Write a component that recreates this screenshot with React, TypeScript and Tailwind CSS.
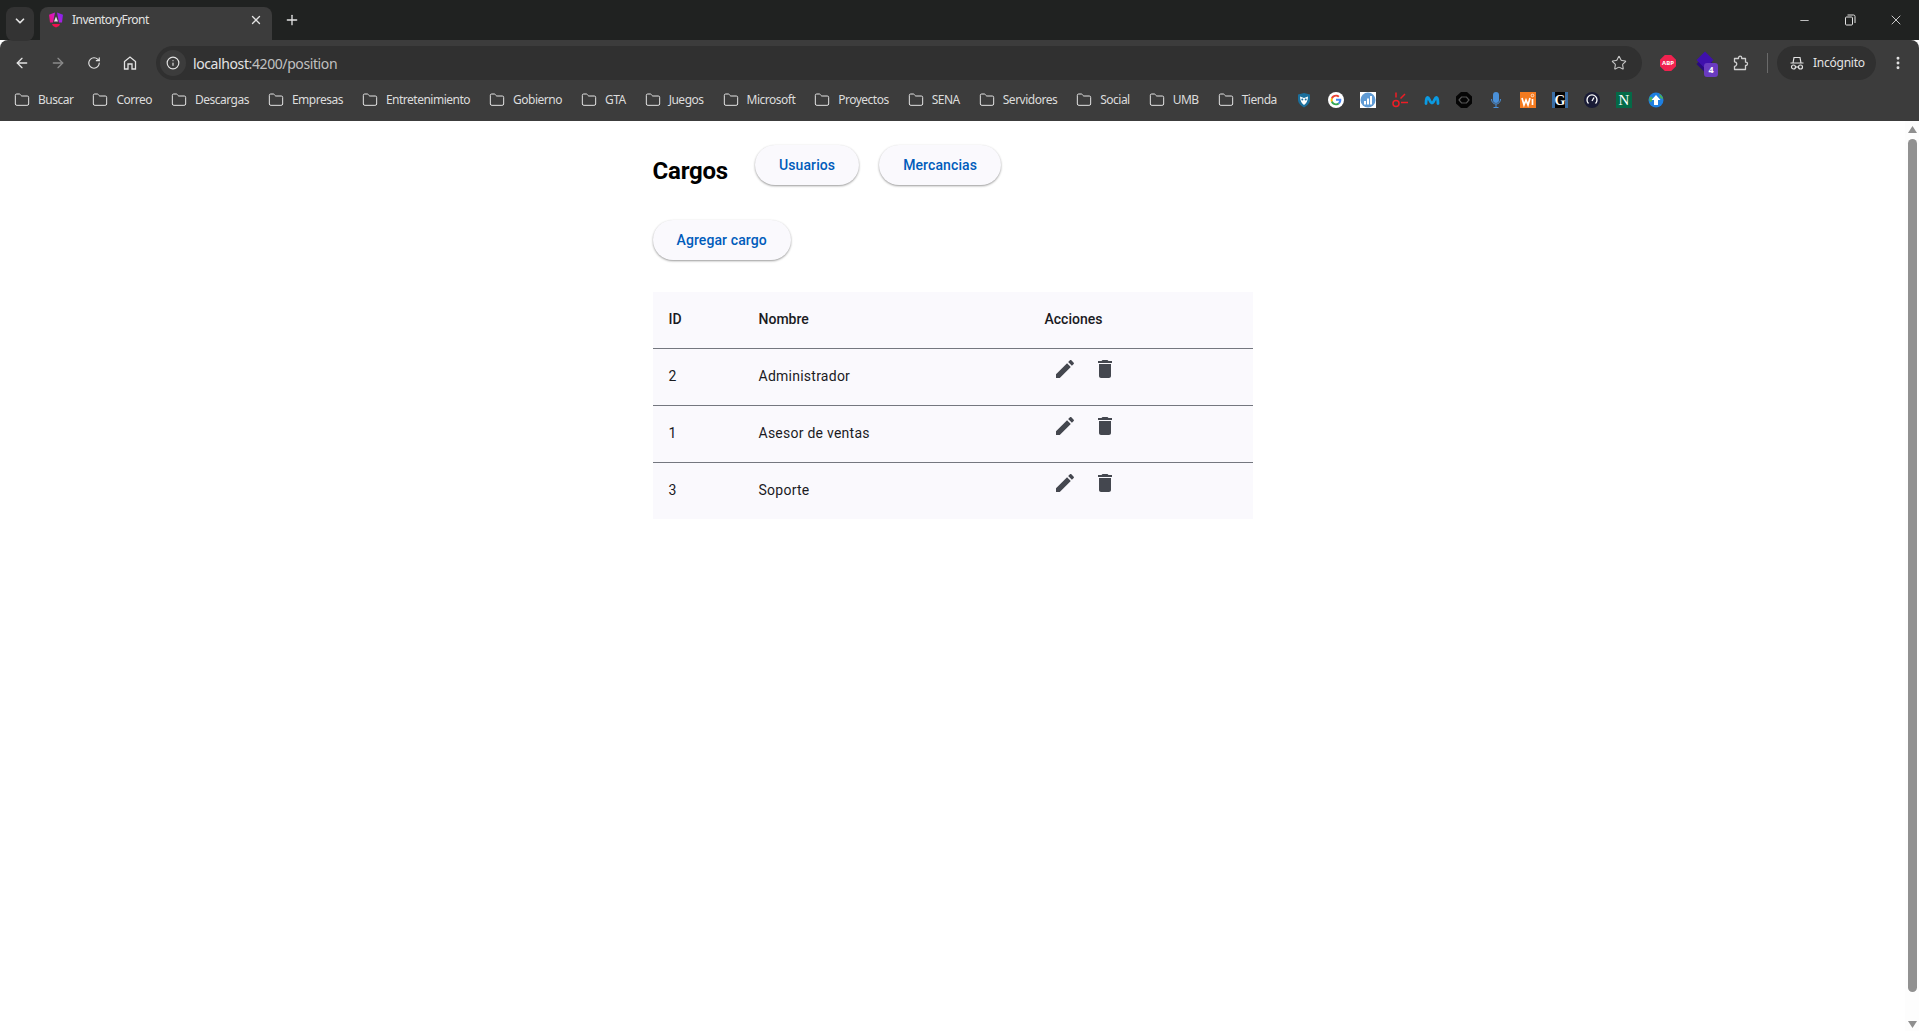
import { ArrowLeft, ArrowRight, ChevronDown, EllipsisVertical, Folder, Info, Minus, Plus, RotateCw, Star, X } from 'lucide-react'

const bookmarks = ['Buscar', 'Correo', 'Descargas', 'Empresas', 'Entretenimiento', 'Gobierno', 'GTA', 'Juegos', 'Microsoft', 'Proyectos', 'SENA', 'Servidores', 'Social', 'UMB', 'Tienda']

const rows = [
  { id: 2, name: 'Administrador' },
  { id: 1, name: 'Asesor de ventas' },
  { id: 3, name: 'Soporte' },
]

function AngularLogo() {
  return (
    <svg width="16" height="16" viewBox="0 0 16 16">
      <defs>
        <linearGradient id="ngl" x1="0" y1="1" x2="1" y2="0">
          <stop offset="0" stopColor="#f5106a" />
          <stop offset="1" stopColor="#c81ee0" />
        </linearGradient>
        <linearGradient id="ngr" x1="0" y1="1" x2="1" y2="0">
          <stop offset="0" stopColor="#c020d8" />
          <stop offset="1" stopColor="#7a22f0" />
        </linearGradient>
      </defs>
      <path fill="url(#ngl)" d="M7 0.500 1 2.700 2 10.500 5 10.500z" />
      <path fill="url(#ngr)" d="M9 0.500 15 2.700 14 10.500 11 10.500z" />
      <path fill="#e8e8e8" d="M8 4.500 10 9.500H6z" />
      <path fill="#f0104f" d="M4 12h8l-1 2-3 1.500L5 14z" />
    </svg>
  )
}

function Favicons() {
  return (
    <div className="flex items-center gap-4">
      <svg width="16" height="16" viewBox="0 0 16 16">
        <path fill="#1b6f9c" d="M2 2.500 8 1l6 1.500V8c0 3-3 6-6 7.500C5 14 2 11 2 8z" />
        <path fill="#fff" d="M4 4.500 8 6l4-1.500C12 9 10 11.500 8 13 6 11.500 4 9 4 4.500z" />
        <circle cx="6.300" cy="7.500" r="1" fill="#1b6f9c" />
        <circle cx="9.700" cy="7.500" r="1" fill="#1b6f9c" />
      </svg>
      <svg width="16" height="16" viewBox="0 0 16 16">
        <circle cx="8" cy="8" r="8" fill="#fff" />
        <path fill="#ea4335" d="M8 2.700c1.400 0 2.600.5 3.500 1.400L10.100 5.500C9.600 5 8.800 4.600 8 4.600c-1.500 0-2.800 1-3.200 2.400L3 5.700C3.900 3.900 5.800 2.700 8 2.700z" />
        <path fill="#fbbc05" d="M2.700 8c0-.8.100-1.600.4-2.300L4.800 7c-.1.300-.2.700-.2 1s.1.700.2 1l-1.700 1.300C2.800 9.600 2.700 8.800 2.700 8z" />
        <path fill="#34a853" d="M8 13.300c-2.200 0-4.100-1.200-5-3L4.800 9c.4 1.400 1.700 2.400 3.200 2.400.8 0 1.500-.2 2-.6l1.600 1.200C10.700 12.800 9.400 13.300 8 13.300z" />
        <path fill="#4285f4" d="M13.200 6.800H8v2h3.200c-.2.800-.6 1.500-1.200 2l1.600 1.200c1-1 1.700-2.400 1.700-4 0-.4 0-.8-.1-1.200z" />
      </svg>
      <svg width="16" height="16" viewBox="0 0 16 16">
        <rect width="16" height="16" fill="#fff" />
        <circle cx="8" cy="8" r="7.500" fill="#5f9bd5" />
        <rect x="4" y="9" width="2" height="3.500" fill="#fff" />
        <rect x="7" y="6.500" width="2" height="6" fill="#fff" />
        <rect x="10" y="4" width="2" height="8.500" fill="#fff" />
      </svg>
      <svg width="16" height="16" viewBox="0 0 16 16" fill="none" stroke="#ef1c25" strokeWidth="1.500">
        <circle cx="4" cy="11.500" r="3" />
        <path d="M4 0.500v5M13 2 8.500 6.500M9 10.500h7" />
      </svg>
      <svg width="16" height="16" viewBox="0 0 16 16" fill="none" stroke="#0b9be3" strokeWidth="2.800" strokeLinecap="round">
        <path d="M2 11.500c0-3 .7-6 1.700-6 1.500 0 2.300 5.500 4.300 5.500s2.800-5.500 4.300-5.500c1 0 1.700 3 1.700 6" />
      </svg>
      <svg width="16" height="16" viewBox="0 0 16 16">
        <path fill="#050505" d="M5 0h6l5 4.500v7L11 16H5l-5-4.500v-7z" />
        <path fill="#050505" stroke="#555" strokeWidth="1.200" d="M3 8 5.500 5h5L13 8l-2.500 3h-5z" />
      </svg>
      <svg width="16" height="16" viewBox="0 0 16 16">
        <rect x="5" y="0" width="6" height="11" rx="3" fill="#4a90d9" />
        <path fill="none" stroke="#4a90d9" d="M3.500 7c0 3 2 5 4.500 5s4.500-2 4.500-5M8 12v3M5.500 15.500h5" />
      </svg>
      <svg width="16" height="16" viewBox="0 0 16 16">
        <rect width="16" height="16" fill="#f47b20" />
        <path fill="none" stroke="#fff" strokeWidth="1.700" d="M2 6l2 7 2-5 2 5 2-7M12.500 7v6" />
        <circle cx="12.500" cy="3.500" r="1.300" fill="none" stroke="#fff" strokeWidth="0.700" />
      </svg>
      <svg width="16" height="16" viewBox="0 0 16 16">
        <rect width="16" height="16" fill="#3a6ea5" />
        <rect x="3" y="0" width="10" height="16" fill="#050505" />
        <text x="8" y="13" textAnchor="middle" fontSize="14" fontWeight="700" fontFamily="Liberation Serif, serif" fill="#fff">G</text>
      </svg>
      <svg width="16" height="16" viewBox="0 0 16 16">
        <circle cx="8" cy="8" r="8" fill="#1a1c36" />
        <path fill="none" stroke="#fff" strokeWidth="1.300" d="M4.500 11.500a5 5 0 1 1 7 0" />
        <path stroke="#fff" strokeWidth="1.300" d="M8 9 10 5.500" />
      </svg>
      <svg width="16" height="16" viewBox="0 0 16 16">
        <rect width="16" height="16" fill="#046a47" />
        <text x="8" y="13" textAnchor="middle" fontSize="15" fontFamily="Liberation Serif, serif" fill="#fff">N</text>
      </svg>
      <svg width="16" height="16" viewBox="0 0 16 16">
        <circle cx="8" cy="8" r="7.500" fill="#1e7fe0" />
        <path fill="#49b05a" d="M1.500 5.500c2-1.500 3-.5 3 1.500s-1 3-2 3-1.500-2.500-1-4.500zM11.500 2c2 1 3.500 3 3.500 5-1.500 0-3-1-3.500-2.500z" />
        <path fill="#fff" d="M8 3l4.500 5H10v5H6V8H3.500z" />
      </svg>
    </div>
  )
}

function ChromeBar() {
  return (
    <div className="font-['Noto_Sans','Liberation_Sans',sans-serif] shrink-0">
      <div className="h-10 bg-[#202221] flex items-start pt-[7px]">
        <div className="w-7 h-[34px] ml-[6px] pb-[7px] rounded-lg bg-[#333] flex items-center justify-center text-[#e3e3e3]">
          <ChevronDown size={14} strokeWidth={3} />
        </div>
        <div className="w-[232px] h-[33px] ml-[6px] pb-[7px] rounded-t-lg bg-[#3c3c3c] flex items-center pl-2 pr-[9px] text-[#e3e3e3]">
          <AngularLogo />
          <span className="ml-2 text-[12px] tracking-[-0.55px]">InventoryFront</span>
          <X size={14} strokeWidth={2.2} className="ml-auto" />
        </div>
        <div className="h-[26px] ml-3 flex items-center text-[#e3e3e3]">
          <Plus size={16} strokeWidth={2} />
        </div>
        <div className="ml-auto h-[26px] flex items-center text-[#e3e3e3]">
          <div className="w-[46px] flex justify-center"><Minus size={13} strokeWidth={1.500} /></div>
          <div className="w-[46px] flex justify-center">
            <svg width="12" height="12" viewBox="0 0 12 12" fill="none" stroke="currentColor">
              <rect x="1.500" y="3" width="7" height="8" rx="1" />
              <path d="M3.500 1h6a1.500 1.500 0 0 1 1.500 1.500V9" />
            </svg>
          </div>
          <div className="w-[46px] flex justify-center"><X size={16} strokeWidth={1.300} /></div>
        </div>
      </div>
      <div className="h-[41px] pt-[6px] pb-px bg-[#3c3c3c] rounded-t-lg flex items-center text-[#e3e3e3]">
        <div className="w-9 ml-1 flex justify-center"><ArrowLeft size={16} strokeWidth={2} /></div>
        <div className="w-9 flex justify-center text-[#8a8a8a]"><ArrowRight size={16} strokeWidth={2} /></div>
        <div className="w-9 flex justify-center"><RotateCw size={14} strokeWidth={2} /></div>
        <div className="w-9 flex justify-center">
          <svg width="16" height="16" viewBox="0 0 16 16" fill="none" stroke="currentColor" strokeWidth="1.300">
            <path d="M2.500 14V6.500L8 2l5.500 4.500V14h-3.500V9H6v5z" />
          </svg>
        </div>
        <div className="ml-2 w-[1486px] h-[34px] rounded-full bg-[#303030] flex items-center pl-1 pr-4">
          <div className="w-[26px] h-[26px] rounded-full bg-[#3c3c3c] flex items-center justify-center"><Info size={14} strokeWidth={2} /></div>
          <span className="ml-[7px] text-[14px] tracking-[-0.4px]">localhost<span className="text-[#c0c0c0]">:4200/position</span></span>
          <Star size={16} strokeWidth={1.600} className="ml-auto mr-[-1px] text-[#c8c8c8]" />
        </div>
        <div className="flex items-center ml-[18px]">
          <div className="w-4 h-4 bg-[#f0224f] [clip-path:polygon(30%_0,70%_0,100%_30%,100%_70%,70%_100%,30%_100%,0_70%,0_30%)] flex items-center justify-center text-[6px] font-bold text-white">ABP</div>
          <div className="relative ml-[20px] w-[18px] h-4">
            <div className="w-3 h-3 rotate-45 bg-[#2a0a80] mt-[3px] ml-[3px]" />
            <div className="absolute left-[3px] top-[-1px] w-3 h-3 rotate-45 bg-[#3f10ad]" />
            <span className="absolute left-2 top-2 w-[14px] h-[14px] rounded-[3px] bg-[#6a3bc0] text-[9px] font-bold text-white flex items-center justify-center">4</span>
          </div>
          <svg width="16" height="16" viewBox="0 0 16 16" fill="none" stroke="currentColor" strokeWidth="1.300" strokeLinejoin="round" className="ml-[19px] text-[#d0d0d0]">
            <path d="M1.500 3.500h4v-.7a1.600 1.600 0 0 1 3.200 0v.7h3.800v3.700h.4a1.600 1.600 0 0 1 0 3.200h-.4v4.100H1.500v-3.200a2.100 2.100 0 0 0 0-4.500z" />
          </svg>
          <div className="w-px h-5 bg-[#6a6a6a] ml-[18px]" />
          <div className="ml-[9px] w-[99px] h-[34px] rounded-full bg-[#303030] flex items-center pl-3">
            <svg width="16" height="16" viewBox="0 0 16 16" fill="none" stroke="currentColor" strokeWidth="1.200">
              <path d="M1.500 8h13M4 8l1-5.500h6L12 8" />
              <circle cx="4.500" cy="12" r="2" />
              <circle cx="11.500" cy="12" r="2" />
              <path d="M6.500 12h3" />
            </svg>
            <span className="ml-2 text-[12px] tracking-[-0.25px]">Incógnito</span>
          </div>
          <EllipsisVertical size={16} strokeWidth={2.400} className="ml-[14px]" />
        </div>
      </div>
      <div className="h-10 pb-[2px] bg-[#3c3c3c] flex items-center pl-[14px] text-[#e3e3e3]">
        {bookmarks.map((b) => (
          <div key={b} className="flex items-center gap-2 mr-[19px]">
            <Folder size={16} strokeWidth={1.500} />
            <span className="text-[12px] tracking-[-0.5px] text-[#dcdcdc]">{b}</span>
          </div>
        ))}
        <Favicons />
      </div>
    </div>
  )
}

function PillButton({ label }: { label: string }) {
  return (
    <button className="h-10 px-6 rounded-full bg-[#faf9fd] text-[#005cbb] text-[14px] font-medium tracking-[0.1px] shadow-[0_1px_2px_rgba(0,0,0,0.3),0_1px_3px_0_rgba(0,0,0,0.12)]">
      {label}
    </button>
  )
}

function IconButton({ d }: { d: string }) {
  return (
    <button className="w-10 h-10 flex items-center justify-center text-[#44474f]">
      <svg width="24" height="24" viewBox="0 0 24 24" fill="currentColor">
        <path d={d} />
      </svg>
    </button>
  )
}

function Scrollbar() {
  return (
    <div className="w-[14px] shrink-0 bg-[#fdfdfd] flex flex-col items-start pl-[3px]">
      <svg width="9" height="7" viewBox="0 0 9 7" className="shrink-0 mt-[5px]"><path d="M0 7 4.500 0 9 7z" fill="#8f8f8f" /></svg>
      <div className="w-[9px] h-[853px] mt-[6px] rounded-full bg-[#919191]" />
      <svg width="9" height="7" viewBox="0 0 9 7" className="shrink-0 mt-auto mb-[3px]"><path d="M0 0 4.500 7 9 0z" fill="#8f8f8f" /></svg>
    </div>
  )
}

export default function App() {
  return (
    <div className="h-screen w-full overflow-hidden flex flex-col bg-white font-['Roboto',sans-serif]">
      <ChromeBar />
      <div className="flex-1 flex min-h-0">
        <main className="flex-1 min-w-0">
          <div className="w-[600px] mx-auto pt-6">
            <div className="flex items-start">
              <h2 className="text-[24px] leading-8 font-bold text-black mt-[10px] mr-[27px] tracking-[-0.2px]">Cargos</h2>
              <PillButton label="Usuarios" />
              <div className="ml-5"><PillButton label="Mercancias" /></div>
            </div>
            <div className="mt-[33px]"><PillButton label="Agregar cargo" /></div>
            <table className="mt-8 w-full table-fixed border-collapse bg-[#faf9fd] text-[14px] text-[#1a1b1f]">
              <thead>
                <tr className="h-14 border-b border-[#74777f]">
                  <th className="w-[90px] pl-4 text-left font-medium">ID</th>
                  <th className="w-[286px] pl-4 text-left font-medium">Nombre</th>
                  <th className="pl-4 text-left font-medium">Acciones</th>
                </tr>
              </thead>
              <tbody>
                {rows.map((r) => (
                  <tr key={r.id} className="h-[57px] border-b border-[#74777f] last:border-b-0 tracking-[0.25px]">
                    <td className="pl-4">{r.id}</td>
                    <td className="pl-4">{r.name}</td>
                    <td className="pl-4 align-top">
                      <div className="flex">
                        <IconButton d="M3 17.250V21h3.750L17.810 9.940l-3.750-3.750L3 17.250zM20.710 7.040c.39-.39.39-1.020 0-1.410l-2.340-2.340c-.39-.39-1.020-.39-1.410 0l-1.830 1.830 3.750 3.750 1.830-1.830z" />
                        <IconButton d="M6 19c0 1.100.9 2 2 2h8c1.100 0 2-.9 2-2V7H6v12zM19 4h-3.500l-1-1h-5l-1 1H5v2h14V4z" />
                      </div>
                    </td>
                  </tr>
                ))}
              </tbody>
            </table>
          </div>
        </main>
        <Scrollbar />
      </div>
    </div>
  )
}
